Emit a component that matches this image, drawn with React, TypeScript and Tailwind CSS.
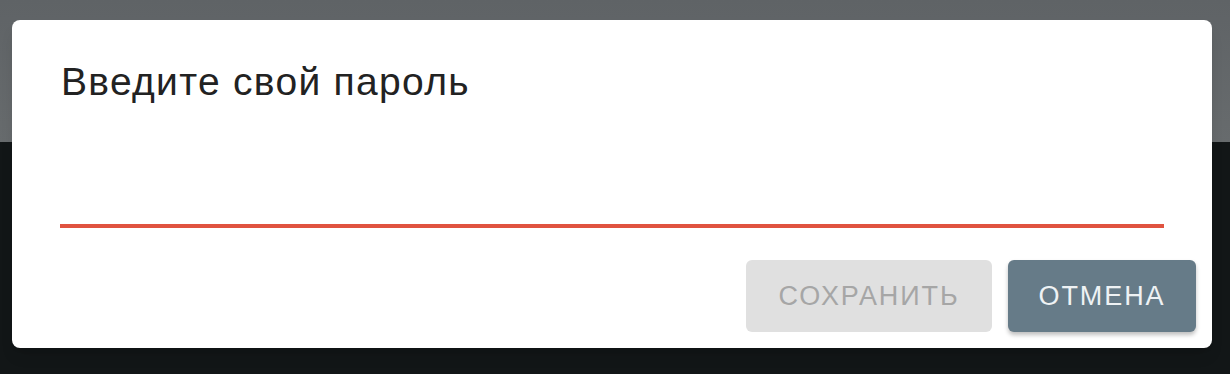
export default function App() {
  return (
    <div className="relative h-[374px] w-full overflow-hidden" style={{ fontFamily: '"Liberation Sans", Arial, sans-serif' }}>
      {/* page behind the backdrop */}
      <div className="flex h-full flex-col">
        <div className="h-[142px] bg-gradient-to-b from-[#5f6366] to-[#676b6d]" />
        <div className="flex-1 bg-[#121617]" />
      </div>

      {/* dialog */}
      <div className="absolute left-[12px] top-[20px] w-[1200px] h-[328px] rounded-[8px] bg-white shadow-lg flex flex-col">
        <h2 className="pl-[49px] pt-[42px] text-[39px] leading-none tracking-[1.3px] text-[#222222] font-normal">
          Введите свой пароль
        </h2>
        <div className="px-[48px] pt-[123px]">
          <div className="h-[4px] bg-[#e05340]" />
        </div>
        <div className="mt-auto flex justify-end gap-[16px] pr-[16px] pb-[16px]">
          <button className="h-[72px] w-[246px] rounded-[6px] bg-[#e0e0e0] text-[27px] text-[#a6a6a6] tracking-[1.9px]">
            СОХРАНИТЬ
          </button>
          <button className="h-[72px] w-[188px] rounded-[6px] bg-[#667b88] text-[27px] text-[#eef2f4] tracking-[1.9px] shadow-[0_3px_4px_rgba(0,0,0,0.25)]">
            ОТМЕНА
          </button>
        </div>
      </div>
    </div>
  );
}
